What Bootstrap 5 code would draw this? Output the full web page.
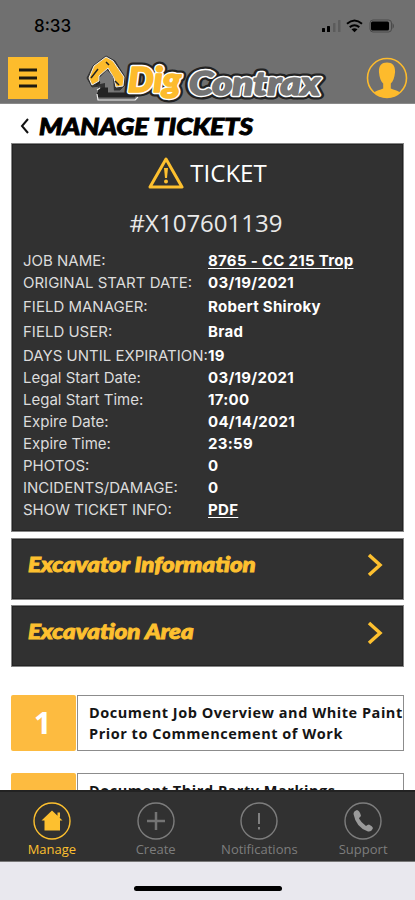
<!DOCTYPE html>
<html lang="en">
<head>
<meta charset="utf-8">
<meta name="viewport" content="width=device-width, initial-scale=1">
<title>DigContrax - Manage Tickets</title>
<link href="https://cdn.jsdelivr.net/npm/bootstrap@5.3.0/dist/css/bootstrap.min.css" rel="stylesheet">
<style>
body{font-family:"Open Sans","Noto Sans",sans-serif;background:#fff;color:#000}
svg{display:block;flex-shrink:0}
.app{height:900px;max-width:415px}
.topbar{height:104px;background:#707070;border-bottom:1px solid #8a8a8a}
.status{height:52px;padding:0 17px 0 34px;font:500 17px/52px Inter,sans-serif}
.brandbar{height:51px;padding:0 7px 0 8px}
.menu-btn{width:40px;height:42px;background:#fdbc2c}
.display-face{font-family:Lato,"Open Sans",sans-serif;font-weight:900;font-style:italic}
h1.display-face,h2.display-face{-webkit-text-stroke:.9px currentColor;transform-origin:0 50%;white-space:nowrap}
.page-head{height:39px;padding:5px 0 0 9px;gap:10px}
.page-head h1{font-size:23px;line-height:34px;transform:scaleX(1.16)}
.content{padding:0 11px;min-height:0}
.panel{background:#313131;border:1px solid #858585;box-shadow:inset 0 0 0 1px #242424;color:#fff}
.ticket{height:389px}
.ticket-title{height:58px;font-size:24px;gap:6px;padding-bottom:1px}
.ticket-no{height:43px;font-size:24px;line-height:41px;color:#e9e9e9;padding-right:3px}
.facts{font:15px/22px Inter,sans-serif;padding:5px 11px 0}
.fact dt{width:185px;font-weight:400;color:#dcdcdc;white-space:nowrap}
.fact dd{font-weight:700;letter-spacing:.3px}
.fact.tall{padding-top:2px}
.fact.taller{padding-top:3px}
.fact a{color:#fff;text-underline-offset:2px}
.link-panel{height:62px;margin-top:5.500px;padding:0 20px 7px 16px;color:#fdc02f}
.link-panel h2{font-size:20.500px;line-height:24px;transform:scaleX(1.175);margin-top:-3px!important}
.steps{padding-top:27.500px;gap:22px}
.step{height:56px}
.step-no{width:65px;background:#fdbb40;color:#fff;font-size:31px;font-weight:700;border-radius:2px;padding-right:2px}
.step-text{border:1px solid #8c8c8c;margin-left:1px;padding:6px 0 0 11px;font-size:14.500px;letter-spacing:.53px;font-weight:700;line-height:21.500px;white-space:nowrap;color:#151515}
.tabs{height:72px;background:#313131;border-top:2px solid #222;border-bottom:1px solid #777;font-size:13px;color:#7d7d7d}
.tab{padding-top:10px;width:104px;line-height:18px}
.tab.current{color:#fdc02f}
.home-area{height:38px;background:#e9e8ee;padding-bottom:9px}
.home-bar{width:148px;height:5px;border-radius:3px;background:#000}
</style>
<script src="https://cdn.jsdelivr.net/npm/bootstrap@5.3.0/dist/js/bootstrap.bundle.min.js"></script>
</head>
<body>
<div class="app d-flex flex-column overflow-hidden">
<header class="topbar flex-shrink-0">
  <div class="status d-flex justify-content-between align-items-center">
    <span>8:33</span>
    <svg width="76" height="16" viewBox="326 18 76 16">
      <g><rect x="326" y="28" width="3" height="4" rx=".6"/><rect x="331" y="26" width="3" height="6" rx=".6"/><g fill="#5c5c5c"><rect x="337" y="23" width="2.500" height="9" rx=".6"/><rect x="342" y="20" width="2.500" height="12" rx=".6"/></g></g>
      <g fill="none" stroke="#000" stroke-width="2"><path d="M351 23.800q7.500-6.500 15 0M353.700 27.100q4.800-3.800 9.600 0"/></g><path d="M355.500 29.200q3-2 6 0l-3 3z"/>
      <rect x="374" y="20" width="21.500" height="12" rx="3" fill="none" stroke="#4a4a4a"/><rect x="375" y="21.500" width="18" height="9" rx="1.500"/><path d="M396.500 23q3 3 0 6z" fill="#4a4a4a"/>
    </svg>
  </div>
  <div class="brandbar d-flex justify-content-between align-items-center">
    <button class="menu-btn btn p-0 border-0 rounded-0 d-flex align-items-center justify-content-center" aria-label="Menu"><svg width="18" height="20" viewBox="0 0 18 20"><path d="M0 2h18M0 10h18M0 18h18" stroke="#1e1a10" stroke-width="3"/></svg></button>
    <svg width="244" height="50" viewBox="86 51 244 50" role="img" aria-label="DigContrax">
      <g stroke-linejoin="round">
        <path d="M88 76l6-12 13-10 9 5 10 16v8l-5 5H106l-5-4-8 1z" fill="#333" stroke="#333" stroke-width="1"/>
        <path d="M90 76l5-12 12-9 7 4 11 16-1 9-7 1-2-9-6-10-9 8v5l-7 4z" fill="#fdbb2c" stroke="#eee" stroke-width="1"/>
        <path d="M101 75l7-7 6 6 1 16h-9v-9l-5 1z" fill="#777"/>
        <path d="M92 76l7-9M97 83l4-3M116 79l4 4M107 60l3 3" stroke="#222" stroke-width="1.500" fill="none"/>
        <path d="M99 88h10M98 93h38" fill="none" stroke="#242424" stroke-width="5"/><path d="M101 86l-3 2M98 92l1 6h37l3-3" fill="none" stroke="#eee" stroke-width="1.200"/>
      </g>
      <g class="display-face" stroke-linejoin="round" paint-order="stroke">
        <g fill="#222" stroke="#222" stroke-width="9"><text x="129" y="90" font-size="34" textLength="53" lengthAdjust="spacingAndGlyphs">Dig</text><text x="190" y="92.500" font-size="32" textLength="131" lengthAdjust="spacingAndGlyphs">Contrax</text></g>
        <g stroke="#fff" stroke-width="4.500"><text x="129" y="90" font-size="34" fill="#fdbb2c" textLength="53" lengthAdjust="spacingAndGlyphs">Dig</text><text x="190" y="92.500" font-size="32" fill="#747474" textLength="131" lengthAdjust="spacingAndGlyphs">Contrax</text></g>
        <g stroke-width="1.600"><text x="129" y="90" font-size="34" fill="#fdbb2c" stroke="#fdbb2c" textLength="53" lengthAdjust="spacingAndGlyphs" aria-hidden="true">Dig</text><text x="190" y="92.500" font-size="32" fill="#747474" stroke="#747474" textLength="131" lengthAdjust="spacingAndGlyphs" aria-hidden="true">Contrax</text></g>
      </g>
    </svg>
    <svg width="42" height="42" viewBox="0 0 42 42"><circle cx="21" cy="21" r="19.500" fill="none" stroke="#fdbb2c" stroke-width="1.600"/><path d="M21 5.500c6 0 8.500 4 8 10-.4 5-2 9-4.200 11v5c3 1.500 7 2 9.200 4A19.500 19.500 0 0 1 8 35.500c2.200-2 6.200-2.500 9.200-4v-5c-2.200-2-3.800-6-4.200-11-.5-6 2-10 8-10z" fill="#fdbb2c"/></svg>
  </div>
</header>
<main class="content flex-grow-1 overflow-hidden">
  <div class="page-head d-flex align-items-center">
    <svg width="9" height="16" viewBox="0 0 9 16"><path d="M8 1L2 8l6 7" fill="none" stroke="#111" stroke-width="2"/></svg>
    <h1 class="display-face m-0">MANAGE TICKETS</h1>
  </div>
  <section class="panel ticket">
    <div class="ticket-title d-flex justify-content-center align-items-center">
      <svg width="36" height="32" viewBox="0 0 36 32"><path d="M18 2L34 30H2z" fill="none" stroke="#fdc02f" stroke-width="3" stroke-linejoin="round"/><path d="M16 11h4l-1 10h-2z" fill="#fdc02f"/><circle cx="18" cy="24.500" r="2" fill="#fdc02f"/></svg>
      <span>TICKET</span>
    </div>
    <div class="ticket-no text-center">#X107601139</div>
    <dl class="facts m-0">
      <div class="fact d-flex"><dt>JOB NAME:</dt><dd class="m-0"><a href="#">8765 - CC 215 Trop</a></dd></div>
      <div class="fact d-flex"><dt>ORIGINAL START DATE:</dt><dd class="m-0">03/19/2021</dd></div>
      <div class="fact tall d-flex"><dt>FIELD MANAGER:</dt><dd class="m-0">Robert Shiroky</dd></div>
      <div class="fact taller d-flex"><dt>FIELD USER:</dt><dd class="m-0">Brad</dd></div>
      <div class="fact tall d-flex"><dt>DAYS UNTIL EXPIRATION:</dt><dd class="m-0">19</dd></div>
      <div class="fact d-flex"><dt>Legal Start Date:</dt><dd class="m-0">03/19/2021</dd></div>
      <div class="fact d-flex"><dt>Legal Start Time:</dt><dd class="m-0">17:00</dd></div>
      <div class="fact d-flex"><dt>Expire Date:</dt><dd class="m-0">04/14/2021</dd></div>
      <div class="fact d-flex"><dt>Expire Time:</dt><dd class="m-0">23:59</dd></div>
      <div class="fact d-flex"><dt>PHOTOS:</dt><dd class="m-0">0</dd></div>
      <div class="fact d-flex"><dt>INCIDENTS/DAMAGE:</dt><dd class="m-0">0</dd></div>
      <div class="fact d-flex"><dt>SHOW TICKET INFO:</dt><dd class="m-0"><a href="#">PDF</a></dd></div>
    </dl>
  </section>
  <section class="panel link-panel d-flex justify-content-between align-items-center"><h2 class="display-face m-0">Excavator Information</h2><svg width="16" height="24" viewBox="0 0 16 24"><path d="M2 2l11 10L2 22" fill="none" stroke="#fdc02f" stroke-width="3.500"/></svg></section>
  <section class="panel link-panel d-flex justify-content-between align-items-center"><h2 class="display-face m-0">Excavation Area</h2><svg width="16" height="24" viewBox="0 0 16 24"><path d="M2 2l11 10L2 22" fill="none" stroke="#fdc02f" stroke-width="3.500"/></svg></section>
  <div class="steps d-flex flex-column">
    <div class="step d-flex flex-shrink-0"><div class="step-no flex-shrink-0 d-flex align-items-center justify-content-center">1</div><div class="step-text flex-grow-1">Document Job Overview and White Paint<br>Prior to Commencement of Work</div></div>
    <div class="step d-flex flex-shrink-0"><div class="step-no flex-shrink-0 d-flex align-items-center justify-content-center">2</div><div class="step-text flex-grow-1">Document Third Party Markings</div></div>
  </div>
</main>
<nav class="tabs flex-shrink-0 d-flex">
  <div class="tab current d-flex flex-column align-items-center"><svg width="38" height="38" viewBox="0 0 38 38"><circle cx="19" cy="19" r="18" fill="none" stroke="currentColor" stroke-width="1.400"/><path d="M19 8.500l10.500 10H27v10H11.500v-10H8.500zM24.500 10.500H27v5h-2.500z" fill="currentColor"/></svg><span>Manage</span></div>
  <div class="tab d-flex flex-column align-items-center"><svg width="38" height="38" viewBox="0 0 38 38"><circle cx="19" cy="19" r="18" fill="none" stroke="currentColor" stroke-width="1.400"/><path d="M19 10v18M10 19h18" stroke="#747474" stroke-width="2.500"/></svg><span>Create</span></div>
  <div class="tab d-flex flex-column align-items-center"><svg width="38" height="38" viewBox="0 0 38 38"><circle cx="19" cy="19" r="18" fill="none" stroke="currentColor" stroke-width="1.400"/><path d="M19 11v11M19 25v2.500" stroke="#8a8a8a" stroke-width="1.800"/></svg><span>Notifications</span></div>
  <div class="tab d-flex flex-column align-items-center"><svg width="38" height="38" viewBox="0 0 38 38"><circle cx="19" cy="19" r="18" fill="none" stroke="currentColor" stroke-width="1.400"/><path d="M9.500 12q0-3 3.500-4 3 1 4 6-2 1.500-2 2.500 2 4 7 7.500 1.500-1.500 3-1.500 3.500 1.500 4 3.500-1.500 4-5 3.500-12-4-14.500-17.500z" fill="#9a9a9a"/></svg><span>Support</span></div>
</nav>
<footer class="home-area flex-shrink-0 d-flex justify-content-center align-items-end"><div class="home-bar"></div></footer>
</div>
</body>
</html>
